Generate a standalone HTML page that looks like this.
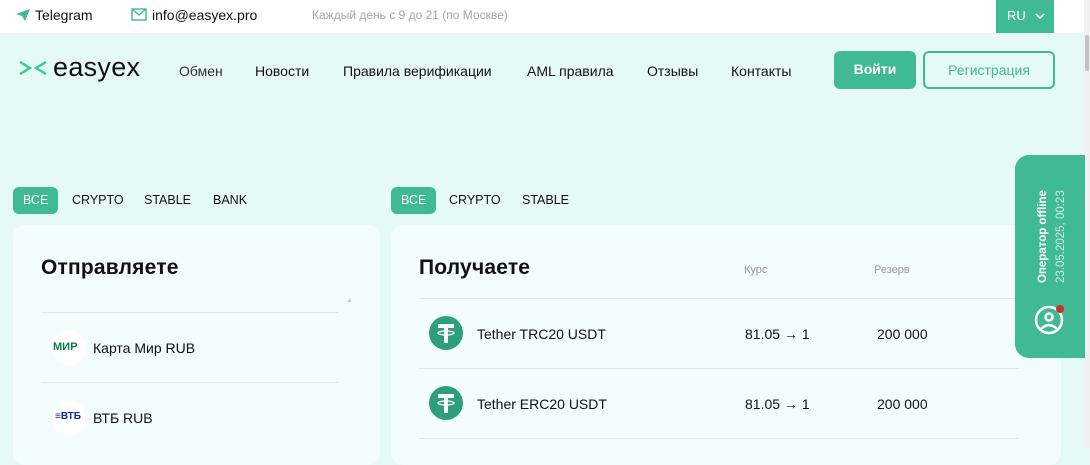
<!DOCTYPE html><html><head><meta charset="utf-8"><style>
*{margin:0;padding:0;box-sizing:border-box}
body{width:1090px;height:448px;overflow:hidden;background:#e6faf5;font-family:"Liberation Sans",sans-serif;color:#111;position:relative}
.top{position:absolute;left:0;top:0;width:1090px;height:33px;background:#fff}
.a{position:absolute;white-space:nowrap}
.g{color:#3fba93}
.tab{position:absolute;height:27px;top:187px;border-radius:6px;font-size:12.5px;line-height:27px;padding:0 10px;color:#111}
.tab.on{background:#3fba93;color:#fff}
.card{position:absolute;top:225px;background:#f3fdfb;border-radius:12px;height:240px}
.hr{position:absolute;height:1px;background:#dfe6ec}
.ic{position:absolute;width:34px;height:34px;border-radius:50%}
</style></head><body>
<div class="top"></div>
<svg class="a" style="left:15px;top:8px" width="16" height="14" viewBox="0 0 16 14"><path d="M1 6 L15 1 L10 13 L7 8 Z" fill="#3fba93"/></svg>
<div class="a" style="left:35px;top:7px;font-size:14px">Telegram</div>
<svg class="a" style="left:131px;top:8px" width="16" height="13" viewBox="0 0 16 13"><rect x="1" y="1" width="14" height="11" fill="none" stroke="#3fba93" stroke-width="1.4"/><path d="M1 1 L8 7 L15 1" fill="none" stroke="#3fba93" stroke-width="1.4"/></svg>
<div class="a" style="left:152px;top:7px;font-size:14px">info@easyex.pro</div>
<div class="a" style="left:312px;top:8px;font-size:12px;color:#9aa">Каждый день с 9 до 21 (по Москве)</div>
<div class="a" style="left:996px;top:0;width:58px;height:33px;background:#3fba93;color:#fff;font-size:13px;line-height:31px;padding-left:11px">RU <svg width="10" height="8" viewBox="0 0 10 8" style="margin-left:6px"><path d="M1 2 L5 6 L9 2" fill="none" stroke="#fff" stroke-width="1.6"/></svg></div>
<div class="a" style="left:1084px;top:0;width:6px;height:448px;background:#f0f0f0"></div>
<div class="a" style="left:1085px;top:35px;width:4px;height:36px;background:#c1c1c1;border-radius:2px"></div>
<svg class="a" style="left:19px;top:61px" width="28" height="14" viewBox="0 0 28 14"><path d="M1 1 L11 7 L1 13 M27 1 L17 7 L27 13" fill="none" stroke="#2fcf96" stroke-width="2.4"/></svg>
<div class="a" style="left:53px;top:52px;font-size:27px;letter-spacing:0.3px">easyex</div>
<div class="a" style="left:179px;top:63px;font-size:14px;color:#333">Обмен</div>
<div class="a" style="left:255px;top:63px;font-size:14px">Новости</div>
<div class="a" style="left:343px;top:63px;font-size:14px">Правила верификации</div>
<div class="a" style="left:527px;top:63px;font-size:14px">AML правила</div>
<div class="a" style="left:647px;top:63px;font-size:14px">Отзывы</div>
<div class="a" style="left:731px;top:63px;font-size:14px">Контакты</div>
<div class="a" style="left:834px;top:51px;width:82px;height:38px;background:#3fba93;border-radius:6px;color:#fff;font-size:14px;font-weight:bold;text-align:center;line-height:37px">Войти</div>
<div class="a" style="left:923px;top:51px;width:132px;height:38px;border:2px solid #3fba93;border-radius:6px;color:#3fba93;font-size:14px;text-align:center;line-height:34px">Регистрация</div>
<div class="tab on" style="left:13px">ВСЕ</div><div class="tab" style="left:62px">CRYPTO</div><div class="tab" style="left:134px">STABLE</div><div class="tab" style="left:203px">BANK</div>
<div class="tab on" style="left:391px">ВСЕ</div><div class="tab" style="left:439px">CRYPTO</div><div class="tab" style="left:512px">STABLE</div>
<div class="card" style="left:13px;width:367px"></div>
<div class="card" style="left:391px;width:670px"></div>
<div class="a" style="left:41px;top:256px;font-size:21px;font-weight:bold;letter-spacing:0.2px">Отправляете</div>
<div class="a" style="left:346px;top:297px;font-size:7px;color:#ccc">▲</div>
<div class="hr" style="left:41px;top:312px;width:297px"></div>
<div class="ic" style="left:52px;top:331px;background:#fff"></div>
<div class="a" style="left:53px;top:341px;font-size:11px;font-weight:bold;color:#0b7a4b">МИР</div>
<div class="a" style="left:93px;top:340px;font-size:14px">Карта Мир RUB</div>
<div class="hr" style="left:41px;top:382px;width:297px"></div>
<div class="ic" style="left:52px;top:401px;background:#fff"></div>
<div class="a" style="left:55px;top:411px;font-size:10px;font-weight:bold;color:#0a2a8a">≡ВТБ</div>
<div class="a" style="left:93px;top:410px;font-size:14px">ВТБ RUB</div>
<div class="a" style="left:419px;top:256px;font-size:21px;font-weight:bold;letter-spacing:0.2px">Получаете</div>
<div class="a" style="left:744px;top:264px;font-size:11px;color:#999">Курс</div>
<div class="a" style="left:874px;top:264px;font-size:11px;color:#999">Резерв</div>
<div class="hr" style="left:419px;top:298px;width:600px"></div>
<div class="hr" style="left:419px;top:368px;width:600px"></div>
<div class="hr" style="left:419px;top:438px;width:600px"></div>
<svg class="a" style="left:429px;top:316px" width="34" height="34" viewBox="0 0 34 34"><circle cx="17" cy="17" r="17" fill="#2f9e7a"/><path d="M9 10 H25 M17 10 V27" stroke="#fff" stroke-width="4"/><ellipse cx="17" cy="17" rx="8" ry="2" fill="none" stroke="#fff" stroke-width="1.3"/></svg>
<svg class="a" style="left:429px;top:386px" width="34" height="34" viewBox="0 0 34 34"><circle cx="17" cy="17" r="17" fill="#2f9e7a"/><path d="M9 10 H25 M17 10 V27" stroke="#fff" stroke-width="4"/><ellipse cx="17" cy="17" rx="8" ry="2" fill="none" stroke="#fff" stroke-width="1.3"/></svg>
<div class="a" style="left:477px;top:326px;font-size:14px">Tether TRC20 USDT</div>
<div class="a" style="left:477px;top:396px;font-size:14px">Tether ERC20 USDT</div>
<div class="a" style="left:745px;top:326px;font-size:14px">81.05 → 1</div>
<div class="a" style="left:745px;top:396px;font-size:14px">81.05 → 1</div>
<div class="a" style="left:877px;top:326px;font-size:14px">200 000</div>
<div class="a" style="left:877px;top:396px;font-size:14px">200 000</div>
<div class="a" style="left:1015px;top:155px;width:70px;height:203px;background:#3fba93;border-radius:14px 0 0 14px"></div>
<div class="a" style="left:1037px;top:283px;transform:rotate(-90deg);transform-origin:0 0;color:#fff;font-size:11.5px;font-weight:bold">Оператор offline</div>
<div class="a" style="left:1055px;top:283px;transform:rotate(-90deg);transform-origin:0 0;color:#cdeee2;font-size:11.5px">23.05.2025, 00:23</div>
<svg class="a" style="left:1034px;top:303px" width="34" height="32" viewBox="0 0 34 32"><circle cx="15" cy="17" r="13" fill="none" stroke="#fff" stroke-width="2.5"/><circle cx="15" cy="14" r="3.5" fill="none" stroke="#fff" stroke-width="2.5"/><path d="M7 26 Q15 18 23 26" fill="none" stroke="#fff" stroke-width="2.5"/><circle cx="26" cy="6" r="4" fill="#c8312f"/></svg>
</body></html>
